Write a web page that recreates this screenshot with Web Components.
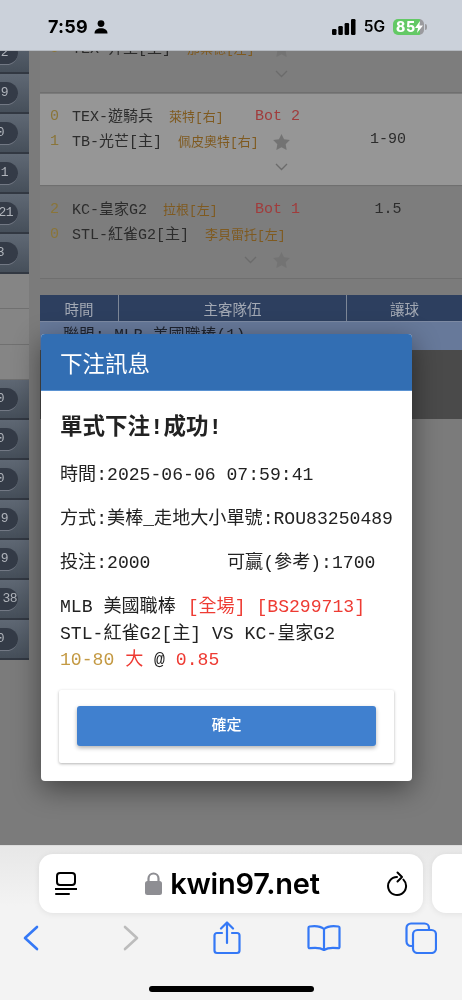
<!DOCTYPE html>
<html>
<head>
<meta charset="utf-8">
<style>
  html, body { margin: 0; padding: 0; }
  body { width: 462px; height: 1000px; overflow: hidden; font-family: "Liberation Mono", "Noto Sans CJK TC", monospace; background: #7e7e7e; }
  app-shell { --mono: "Liberation Mono", "Noto Sans CJK TC", monospace; --sans: Roboto, "Noto Sans CJK TC", sans-serif; }
  bet-dialog i { font-style: normal; }
  bet-dialog i.r { color: #ee3b33; }
  bet-dialog i.g { color: #c49a44; }
  bet-dialog i.tag { margin-left: 1px; }
</style>
</head>
<body>
<app-shell>
  <status-bar slot="top"></status-bar>
  <behind-page slot="page">
    <side-rail slot="rail"></side-rail>
    <match-row shade="dark" s2="0" t2="TEX-井主[主]" p2="那葉德[左]" chev="center"></match-row>
    <match-row shade="light" s1="0" t1="TEX-遊騎兵" p1="萊特[右]" status="Bot 2" s2="1" t2="TB-光芒[主]" p2="佩皮奧特[右]" odds2="1-90" chev="center"></match-row>
    <match-row shade="dark" s1="2" t1="KC-皇家G2" p1="拉根[左]" status="Bot 1" odds1="1.5" s2="0" t2="STL-紅雀G2[主]" p2="李貝雷托[左]" chev="left"></match-row>
    <odds-table></odds-table>
  </behind-page>
  <bet-dialog slot="dialog">
    <span slot="title">下注訊息</span>
    <h3>單式下注!成功!</h3>
    <p>時間:2025-06-06 07:59:41</p>
    <p>方式:美棒_走地大小單號:ROU83250489</p>
    <p class="two"><span>投注:2000</span><span>可贏(參考):1700</span></p>
    <p class="slip">MLB 美國職棒 <i class="r tag">[全場] [BS299713]</i><br>STL-紅雀G2[主] VS KC-皇家G2<br><i class="g">10-80</i> <i class="r">大</i> @ <i class="r">0.85</i></p>
  </bet-dialog>
  <browser-bar slot="bottom"></browser-bar>
</app-shell>

<script>
class AppShell extends HTMLElement {
  constructor() {
    super();
    this.attachShadow({ mode: "open" });
    this.shadowRoot.innerHTML = `
      <style>
        :host { display: flex; flex-direction: column; position: relative; width: 462px; height: 1000px; overflow: hidden; filter: blur(.35px); }
        .page { flex: 1; min-height: 0; overflow: hidden; }
      </style>
      <slot name="top"></slot>
      <div class="page"><slot name="page"></slot></div>
      <slot name="bottom"></slot>
      <slot name="dialog"></slot>
    `;
  }
}
customElements.define("app-shell", AppShell);

class StatusBar extends HTMLElement {
  constructor() {
    super();
    this.attachShadow({ mode: "open" });
    this.shadowRoot.innerHTML = `
      <style>
        :host { display: flex; align-items: center; border-bottom: 1px solid #b4b9c0; padding: 4px 35px 0 48px; box-sizing: content-box; height: 46px; background: #cbd1da; position: relative; z-index: 2; color: #000; font-family: Inter, sans-serif; }
        .time { font-size: 18px; font-weight: 700; letter-spacing: .2px; line-height: 20px; }
        svg { display: block; }
        .person { margin-left: 6px; }
        .right { margin-left: auto; display: flex; align-items: center; }
        .net { font-size: 15.5px; font-weight: 600; margin: 0 8px 0 8px; line-height: 20px; }
        .bat { position: relative; width: 31px; height: 16px; border-radius: 5px; overflow: hidden; background: linear-gradient(90deg, #63c965 0 27px, #9a9a9e 27px); display: flex; align-items: center; padding-left: 3px; box-sizing: border-box; color: #fff; font-size: 14px; font-weight: 800; letter-spacing: .6px; line-height: 16px; }
        .bat svg { position: absolute; left: 22px; top: 2px; }
        .nub { width: 2px; height: 6px; background: #9a9a9e; border-radius: 0 2px 2px 0; margin-left: 1px; }
      </style>
      <span class="time">7:59</span>
      <svg class="person" width="14" height="14" viewBox="0 0 14 14"><circle cx="7" cy="3.6" r="3.4" fill="#000"/><path d="M.5 13.5c0-3.6 2.9-5.2 6.5-5.2s6.500 1.600 6.500 5.200z" fill="#000"/></svg>
      <div class="right">
        <svg width="24" height="16" viewBox="0 0 24 16"><rect x="0" y="10" width="4.500" height="6" rx="1.200"/><rect x="6.300" y="7" width="4.500" height="9" rx="1.200"/><rect x="12.600" y="4" width="4.500" height="12" rx="1.200"/><rect x="19" y="0" width="4.500" height="16" rx="1.200"/></svg>
        <span class="net">5G</span>
        <div class="bat">85<svg width="8" height="12" viewBox="0 0 8 12"><path d="M5 0 0 7h3l-1 5 6-7.500H4.500z" fill="#fff"/></svg></div>
        <div class="nub"></div>
      </div>
    `;
  }
}
customElements.define("status-bar", StatusBar);

class BehindPage extends HTMLElement {
  constructor() {
    super();
    this.attachShadow({ mode: "open" });
    this.shadowRoot.innerHTML = `
      <style>
        :host { display: grid; grid-template-columns: 29px 1fr; column-gap: 11px; margin-top: -50px; background: #7b7b7b; height: 900px; }
        .main { display: flex; flex-direction: column; min-width: 0; }
      </style>
      <slot name="rail"></slot>
      <div class="main"><slot></slot></div>
    `;
  }
}
customElements.define("behind-page", BehindPage);

class SideRail extends HTMLElement {
  constructor() {
    super();
    this.attachShadow({ mode: "open" });
    const pills = (list) => list.map(([n, pad]) => `<div class="cell"><span class="pill" style="padding-right:${pad}px">${n}</span></div>`).join("");
    this.shadowRoot.innerHTML = `
      <style>
        :host { display: block; font-family: var(--mono); padding-top: 33px; overflow: hidden; }
        .cell { height: 38px; display: flex; align-items: center; justify-content: flex-end; padding-right: 11px; background: linear-gradient(#5f6874, #464f5a); border-bottom: 2px solid #323842; }
        .pill { flex: none; display: block; min-width: 30px; text-align: right; height: 22px; line-height: 22px; border-radius: 0 12px 12px 0; background: #343b47; border-bottom: 1px solid #727884; color: #b0b4bb; font-size: 13px; letter-spacing: -.5px; }
        .blank { height: 34px; background: #858585; border-bottom: 1px solid #707070; }
      </style>
      ${pills([["2", 10], ["9", 10], ["0", 14], ["1", 10], ["21", 5], ["3", 14]])}
      <div class="blank"></div><div class="blank" style="height:35px"></div><div class="blank" style="height:34px"></div>
      ${pills([["0", 14], ["0", 14], ["0", 14], ["9", 10], ["9", 10], ["38", 1], ["0", 14]])}
    `;
  }
}
customElements.define("side-rail", SideRail);

class MatchRow extends HTMLElement {
  connectedCallback() {
    const a = (n) => this.getAttribute(n) || "";
    const shade = a("shade") === "light" ? "#969696" : "#7d7d7d";
    const star = `<svg class="star" width="17" height="16" viewBox="0 0 24 23"><path d="M12 0l3.700 7.600 8.300 1.200-6 5.900 1.400 8.300-7.400-3.900-7.400 3.900L6 14.700 0 8.800l8.300-1.200z" fill="#737373"/></svg>`;
    const chev = `<svg class="chev" width="13" height="8" viewBox="0 0 13 8"><path d="M1 1l5.500 5.500L12 1" fill="none" stroke="#6b6b6b" stroke-width="1.300"/></svg>`;
    const pitcher = (t) => t.replace(/(\[.*\])/, '<small>$1</small>');
    const isLeft = a("chev") === "left";
    this.attachShadow({ mode: "open" });
    this.shadowRoot.innerHTML = `
      <style>
        :host { display: grid; grid-template-columns: 22px 183px 105px 1fr; grid-auto-rows: 25px; align-content: start; padding: 10px 0 0 10px; height: 81px; margin-bottom: 1px; background: ${shade}; border-bottom: 1px solid #6f6f6f; font-family: var(--mono); color: #2c2c2c; font-size: 15px; box-sizing: content-box; }
        div { display: flex; align-items: center; white-space: nowrap; min-width: 0; }
        .score { color: #8a7539; }
        .team { padding-bottom: 3px; box-sizing: border-box; }
        .pitch { color: #7f5a20; font-size: 13px; margin-left: 16px; }
        small { font-size: 13px; }
        .status { color: #a03c3c; }
        .odds { justify-content: center; width: 56px; color: #2c2c2c; }
        .up { padding-bottom: 4px; box-sizing: border-box; }
        .star { margin-left: 18px; display: block; }
        .foot { grid-column: 3; justify-content: flex-start; }
        .foot-left { justify-content: flex-end; padding-right: 70px; gap: 16px; }
        .chev { display: block; }
      </style>
      <div class="score">${a("s1")}</div>
      <div class="team">${a("t1")}<span class="pitch">${pitcher(a("p1"))}</span></div>
      <div class="status">${a("status")}</div>
      <div class="odds">${a("odds1")}</div>
      <div class="score">${a("s2")}</div>
      <div class="team">${a("t2")}<span class="pitch">${pitcher(a("p2"))}</span></div>
      <div>${isLeft ? "" : star}</div>
      <div class="odds up">${a("odds2")}</div>
      ${isLeft
        ? `<div class="foot-left" style="grid-column:1 / 4">${chev}${star.replace('class="star"', 'class="star" style="margin:0"')}</div>`
        : `<div class="foot" style="padding-left:20px">${chev}</div>`}
    `;
  }
}
customElements.define("match-row", MatchRow);

class OddsTable extends HTMLElement {
  constructor() {
    super();
    this.attachShadow({ mode: "open" });
    this.shadowRoot.innerHTML = `
      <style>
        :host { display: block; margin-top: 15px; font-family: var(--sans); }
        .head { display: grid; grid-template-columns: 79px 228px 1fr; height: 26px; background: #2d3f5f; }
        .head span { display: flex; align-items: center; justify-content: center; color: #a3a9b4; font-size: 14.500px; border-right: 1px solid #7d8797; }
        .head span:last-child { border-right: 0; }
        .league { height: 28px; background: #67799a; color: #1e2430; font-family: var(--mono); font-size: 16px; padding-left: 23px; line-height: 29px; border-top: 1px solid #7d8aa3; overflow: hidden; }
        .dark { height: 69px; background: #4a4a4a; }
      </style>
      <div class="head"><span>時間</span><span>主客隊伍</span><span>讓球</span></div>
      <div class="league">聯盟: MLB 美國職棒(1)</div>
      <div class="dark"></div>
    `;
  }
}
customElements.define("odds-table", OddsTable);

class OkButton extends HTMLElement {
  constructor() {
    super();
    this.attachShadow({ mode: "open" });
    this.shadowRoot.innerHTML = `
      <style>
        :host { display: flex; align-items: center; justify-content: center; height: 40px; background: #4080cf; border-radius: 3px; color: #fff; font-family: var(--sans); font-size: 15px; font-weight: 500; box-shadow: 0 2px 4px rgba(0,0,0,.3); padding-bottom: 5px; box-sizing: border-box; }
      </style>
      <slot></slot>
    `;
  }
}
customElements.define("ok-button", OkButton);

class BetDialog extends HTMLElement {
  constructor() {
    super();
    this.attachShadow({ mode: "open" });
    this.shadowRoot.innerHTML = `
      <style>
        :host { display: block; position: absolute; left: 41px; top: 334px; width: 371px; height: 447px; background: #fff; border-radius: 4px; box-shadow: 0 8px 28px rgba(0,0,0,.45); overflow: hidden; font-family: var(--mono); color: #222; }
        .title { height: 57px; padding-left: 19px; display: flex; align-items: center; background: #326eb3; border-bottom: 1px solid #5a92d2; box-sizing: border-box; color: #fff; font-family: var(--sans); font-size: 22.500px; font-weight: 400; }
        .body { padding: 21px 18px 0 19px; }
        ::slotted(h3) { margin: 0 0 20px; font-family: var(--mono); font-size: 22.500px; line-height: 32px; font-weight: 700; color: #222; }
        ::slotted(p) { margin: 0 0 22px; font-size: 18.100px; line-height: 22px; white-space: nowrap; }
        ::slotted(p.two) { display: grid; grid-template-columns: 167px auto; margin: 1px 0 20px; }
        ::slotted(p.slip) { line-height: 26.500px; margin: 0; }
        .foot { margin: 16px 18px 0; padding: 16px 18px 17px; background: #fff; border-radius: 2px; box-shadow: 0 1px 3px rgba(0,0,0,.3); }
      </style>
      <div class="title"><slot name="title"></slot></div>
      <div class="body"><slot></slot></div>
      <div class="foot"><ok-button>確定</ok-button></div>
    `;
  }
}
customElements.define("bet-dialog", BetDialog);

class BrowserBar extends HTMLElement {
  constructor() {
    super();
    this.attachShadow({ mode: "open" });
    this.shadowRoot.innerHTML = `
      <style>
        :host { display: block; position: relative; z-index: 2; height: 155px; background: linear-gradient(#e7e7e7, #f3f3f3 60px); border-top: 1px solid #dcdcdc; box-sizing: border-box; padding-top: 8px; overflow: hidden; font-family: Inter, sans-serif; }
        .tabs { display: flex; gap: 9px; padding-left: 39px; width: 600px; }
        .url { flex: none; width: 384px; height: 59px; background: #fff; border-radius: 14px; box-shadow: 0 1px 6px rgba(0,0,0,.08); display: flex; align-items: center; padding: 0 15px 0 16px; box-sizing: border-box; }
        .next { flex: none; width: 100px; height: 59px; background: #fff; border-radius: 14px; box-shadow: 0 1px 6px rgba(0,0,0,.08); }
        .site { flex: 1; display: flex; align-items: center; justify-content: center; gap: 8px; margin-left: 2px; font-size: 29px; font-weight: 600; color: #000; letter-spacing: -.2px; }
        svg { display: block; flex: none; }
        .tools { display: grid; grid-template-columns: repeat(5, 97.500px); justify-items: center; align-items: center; height: 34px; margin: 8px 0 0 -18px; }
        .tools svg { fill: none; stroke: #3478f6; stroke-width: 2.200; stroke-linecap: round; stroke-linejoin: round; }
        .home { position: absolute; left: 149px; top: 140px; width: 165px; height: 6px; border-radius: 3px; background: #000; }
      </style>
      <div class="tabs">
        <div class="url">
          <svg width="22" height="25" viewBox="0 0 22 25" fill="none" stroke="#000" stroke-width="2"><rect x="2" y="2" width="18" height="12" rx="3"/><path d="M0 18h22M1 23h13" stroke-linecap="round"/></svg>
          <div class="site">
            <svg width="17" height="23" viewBox="0 0 17 23"><path d="M3.500 10V6.500a5 5 0 0 1 10 0V10" fill="none" stroke="#8e8e93" stroke-width="2.200"/><rect x="0" y="9" width="17" height="14" rx="2.500" fill="#8e8e93"/></svg>
            <span>kwin97.net</span>
          </div>
          <svg width="22" height="26" viewBox="0 0 22 26" fill="none" stroke="#000" stroke-width="2" stroke-linecap="round" stroke-linejoin="round"><path d="M11 6A9 9 0 1 0 17.400 8.600"/><path d="M11.500 1.500 16 6l-4.500 4.500"/></svg>
        </div>
        <div class="next"></div>
      </div>
      <div class="tools">
        <svg width="16" height="26" viewBox="0 0 16 26"><path d="M14 2 2 13l12 11" stroke-width="2.600"/></svg>
        <svg width="16" height="26" viewBox="0 0 16 26" style="margin-left:5px;stroke:#bcbcbc"><path d="M2 2l12 11L2 24" stroke-width="2.600"/></svg>
        <svg width="28" height="34" viewBox="0 0 28 34" style="margin-left:2px"><path d="M9 12H4a2.500 2.500 0 0 0-2.500 2.500v15A2.500 2.500 0 0 0 4 32h20a2.500 2.500 0 0 0 2.500-2.500v-15A2.500 2.500 0 0 0 24 12h-5"/><path d="M14 22V2M8 7.500 14 1.500l6 6"/></svg>
        <svg width="34" height="28" viewBox="0 0 34 28" style="margin-left:1px"><path d="M17 5C14 2.500 9 1.500 2.500 2.500 1.800 2.600 1.500 3 1.500 3.800V23c0 1 .6 1.300 1.500 1.200C8 23.500 14 24 17 26c3-2 9-2.500 14-1.800 .9 .1 1.500-.2 1.500-1.200V3.800c0-.8-.3-1.200-1-1.300C25 1.500 20 2.500 17 5zM17 5v21"/></svg>
        <svg width="32" height="32" viewBox="0 0 32 32"><rect x="8" y="8" width="23" height="23" rx="4.500"/><path d="M8 24H6a4.500 4.500 0 0 1-4.500-4.500V6A4.500 4.500 0 0 1 6 1.500h13.500A4.500 4.500 0 0 1 24 6v2"/></svg>
      </div>
      <div class="home"></div>
    `;
  }
}
customElements.define("browser-bar", BrowserBar);
</script>
</body>
</html>
